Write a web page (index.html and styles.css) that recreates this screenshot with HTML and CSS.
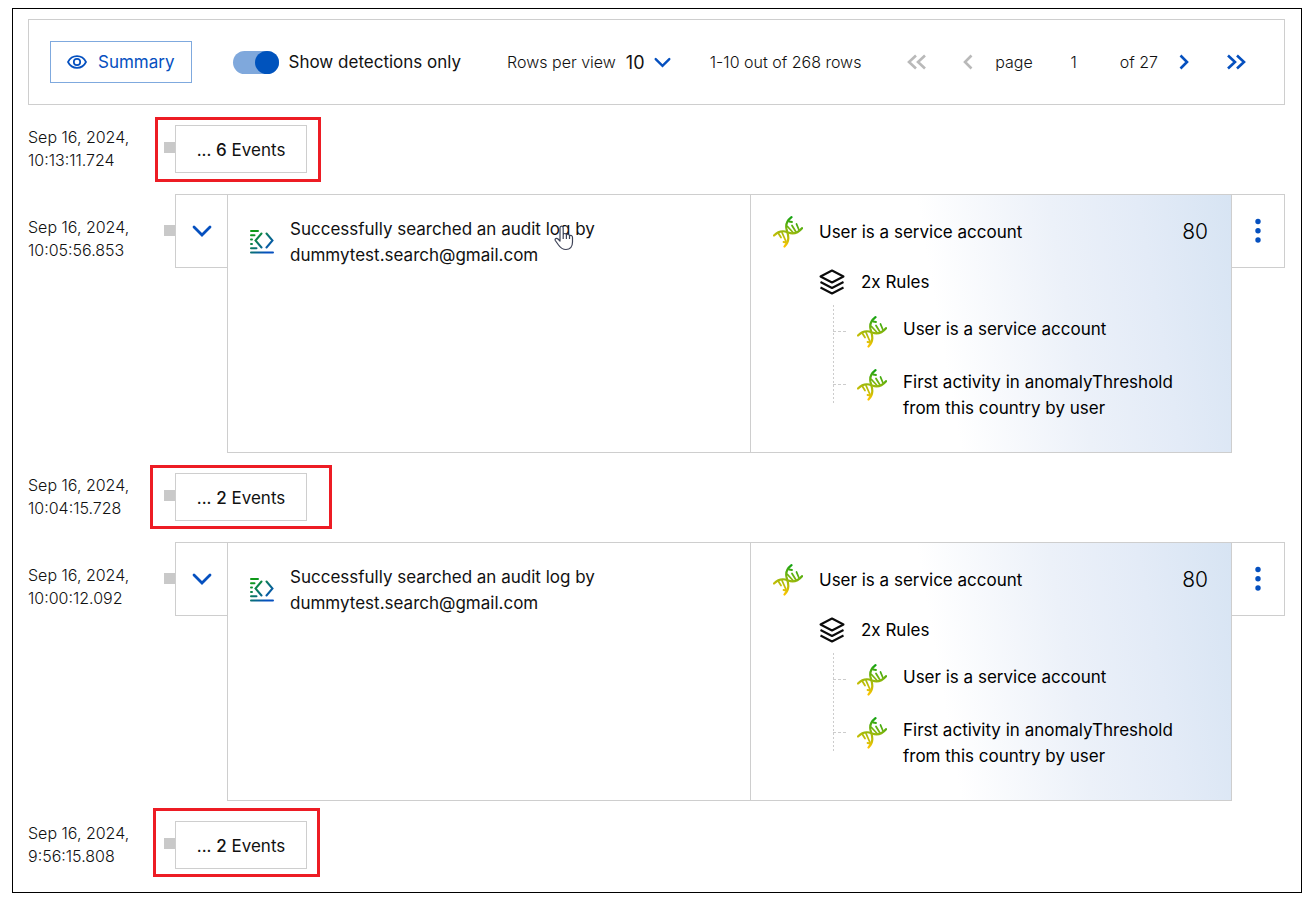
FILE: index.html
```html
<!DOCTYPE html>
<html lang="en">
<head>
<meta charset="utf-8">
<title>Event timeline</title>
<link rel="stylesheet" href="styles.css">
</head>
<body>
<svg class="defs" aria-hidden="true">
  <defs>
    <linearGradient id="dna-grad" gradientUnits="userSpaceOnUse" x1="19" y1="1" x2="11" y2="31">
      <stop offset="0" stop-color="#12a312"/><stop offset=".5" stop-color="#96b80c"/><stop offset="1" stop-color="#ffc400"/>
    </linearGradient>
    <linearGradient id="audit-grad" gradientUnits="userSpaceOnUse" x1="4" y1="3" x2="20" y2="20">
      <stop offset="0" stop-color="#0f9a16"/><stop offset="1" stop-color="#0550bf"/>
    </linearGradient>
    <symbol id="dna" viewBox="0 0 30 32">
      <g fill="none" stroke="url(#dna-grad)" stroke-linecap="round">
        <path stroke-width="2.200" d="M18.500 1.200C13.500 5 12.500 8.500 13.500 13C15 18.500 17.500 24.500 11.500 30.500"/>
        <path stroke-width="2.200" d="M1 19.500C6 14.500 10 14.500 15 16.500C20 18.500 25 17 29 12.200"/>
        <path stroke-width="1.800" d="M16 5.500l3 .5M14.500 10.500l5.500 6M19 9.500l4 6.500M23.500 8l2.500 6M5.500 17.500l2.500 4M9 16.500l4 9M13 26.500l-2.500-.5"/>
      </g>
    </symbol>
    <symbol id="audit" viewBox="0 0 24 25">
      <g fill="none" stroke="url(#audit-grad)" stroke-width="2" stroke-linecap="round">
        <path d="M1 2h7M1 6.300h3.500M1 10.600h1M1 14.900h1M1 19.200h5.500M11.500 4.500L5.500 11.500L11.500 18.500M16.500 4.500L22.500 11.500L16.500 18.500"/>
        <path d="M1 23.500L23 23.600"/>
      </g>
    </symbol>
    <symbol id="layers" viewBox="0 0 26 26">
      <path d="M13 1.500L24.500 7.500L13 13.500L1.500 7.500ZM1.500 13L13 19L24.500 13M1.500 18.500L13 24.500L24.500 18.500" fill="none" stroke="#0b0b0b" stroke-width="2" stroke-linejoin="round"/>
    </symbol>
    <symbol id="down" viewBox="0 0 20 12">
      <path d="M2 2l8 8 8-8" fill="none" stroke="currentColor" stroke-width="2.800" stroke-linecap="round"/>
    </symbol>
    <symbol id="dots" viewBox="0 0 6 26">
      <g fill="currentColor"><circle cx="3" cy="3.500" r="2.700"/><circle cx="3" cy="12.700" r="2.700"/><circle cx="3" cy="22" r="2.700"/></g>
    </symbol>
  </defs>
</svg>

<main class="frame">
  <header class="toolbar">
    <button class="summary" type="button">
      <svg width="20" height="14" viewBox="0 0 20 14" fill="none" stroke="currentColor" stroke-width="1.700"><path d="M1 7C3 3 6.200 1.100 10 1.100S17 3 19 7C17 11 13.800 12.900 10 12.900S3 11 1 7Z"/><circle cx="10" cy="7" r="3.200"/></svg>
      Summary
    </button>
    <label class="switch"><input type="checkbox" checked><span>Show detections only</span></label>
    <div class="rows">
      <label for="rows-per-view">Rows per view</label>
      <span class="select"><select id="rows-per-view"><option>10</option></select><svg width="17" height="11"><use href="#down"/></svg></span>
    </div>
    <span class="count">1-10 out of 268 rows</span>
    <nav class="pager" aria-label="Pages">
      <button type="button" class="off" aria-label="First page" disabled><svg width="20" height="16" viewBox="0 0 20 16"><path d="M9 1.500L2 8l7 6.500M18 1.500L11 8l7 6.500"/></svg></button>
      <button type="button" class="off prev" aria-label="Previous page" disabled><svg width="12" height="16" viewBox="0 0 12 16"><path d="M9.500 1.500L3 8l6.500 6.500"/></svg></button>
      <label for="page-number">page</label>
      <input id="page-number" type="text" value="1">
      <span>of 27</span>
      <button type="button" class="next" aria-label="Next page"><svg width="12" height="16" viewBox="0 0 12 16"><path d="M2.500 1.500L9 8l-6.500 6.500"/></svg></button>
      <button type="button" class="last" aria-label="Last page"><svg width="20" height="16" viewBox="0 0 20 16"><path d="M2 1.500L9 8l-7 6.500M11 1.500L18 8l-7 6.500"/></svg></button>
    </nav>
  </header>

  <section class="timeline">
    <div class="row group">
      <time>Sep 16, 2024,<br>10:13:11.724</time>
      <i class="tick"></i>
      <button class="events" type="button">... <b>6</b> Events</button>
      <div class="mark mark-first"></div>
    </div>

    <article class="row entry">
      <time>Sep 16, 2024,<br>10:05:56.853</time>
      <i class="tick"></i>
      <button class="side expand" type="button" aria-label="Expand"><svg width="20" height="12"><use href="#down"/></svg></button>
      <div class="event">
        <svg width="24" height="25"><use href="#audit"/></svg>
        <p>Successfully searched an audit log by dummytest.search@gmail.com</p>
        <svg class="cursor" width="20" height="26" viewBox="0 0 20 26"><path d="M6 16V3.200C6 .5 9.200.5 9.200 3.200V10C9.500 8 12.200 8 12.400 10.200C13 8.500 15.300 9 15.500 11C16.500 9.800 18.500 10.500 18.500 12.500V17C18.500 22 16 24.500 12 24.500C8 24.500 6.500 23 4.500 20L1.300 15.500C.5 13.800 2.500 12.500 4 14ZM9.200 10v4M12.400 10.500v3.500M15.500 11.500V14" fill="#fff" stroke="#3d4256" stroke-width="1.200" stroke-linejoin="round"/></svg>
      </div>
      <div class="detection">
        <div class="head"><svg width="30" height="32"><use href="#dna"/></svg><span>User is a service account</span><span class="score">80</span></div>
        <div class="rules"><svg width="26" height="26"><use href="#layers"/></svg><span>2x Rules</span></div>
        <ul class="tree">
          <li><svg width="30" height="32"><use href="#dna"/></svg><span>User is a service account</span></li>
          <li><svg width="30" height="32"><use href="#dna"/></svg><span>First activity in anomalyThreshold from this country by user</span></li>
        </ul>
      </div>
      <button class="side menu" type="button" aria-label="More actions"><svg width="6" height="26"><use href="#dots"/></svg></button>
    </article>

    <div class="row group">
      <time>Sep 16, 2024,<br>10:04:15.728</time>
      <i class="tick"></i>
      <button class="events" type="button">... <b>2</b> Events</button>
      <div class="mark mark-second"></div>
    </div>

    <article class="row entry">
      <time>Sep 16, 2024,<br>10:00:12.092</time>
      <i class="tick"></i>
      <button class="side expand" type="button" aria-label="Expand"><svg width="20" height="12"><use href="#down"/></svg></button>
      <div class="event">
        <svg width="24" height="25"><use href="#audit"/></svg>
        <p>Successfully searched an audit log by dummytest.search@gmail.com</p>
      </div>
      <div class="detection">
        <div class="head"><svg width="30" height="32"><use href="#dna"/></svg><span>User is a service account</span><span class="score">80</span></div>
        <div class="rules"><svg width="26" height="26"><use href="#layers"/></svg><span>2x Rules</span></div>
        <ul class="tree">
          <li><svg width="30" height="32"><use href="#dna"/></svg><span>User is a service account</span></li>
          <li><svg width="30" height="32"><use href="#dna"/></svg><span>First activity in anomalyThreshold from this country by user</span></li>
        </ul>
      </div>
      <button class="side menu" type="button" aria-label="More actions"><svg width="6" height="26"><use href="#dots"/></svg></button>
    </article>

    <div class="row group">
      <time>Sep 16, 2024,<br>9:56:15.808</time>
      <i class="tick"></i>
      <button class="events" type="button">... <b>2</b> Events</button>
      <div class="mark mark-third"></div>
    </div>
  </section>
</main>
</body>
</html>
```
FILE: styles.css
```css
* { box-sizing: border-box; }
body { margin: 8px 11px 9px 12px; background: #fff; color: #111; font: 16px/23px Inter, "Liberation Sans", sans-serif; }
button, input, select { font: inherit; color: inherit; background: none; border: 0; padding: 0; margin: 0; }
button { cursor: pointer; }
svg { display: block; flex: none; }
p, ul { margin: 0; padding: 0; }
b { font-weight: 500; }
.defs { position: absolute; width: 0; height: 0; }

.frame { border: 1px solid #000; padding: 10px 16px 23px 15px; }

/* toolbar */
.toolbar { display: flex; align-items: center; border: 1px solid #cecece; padding: 21px 38px 21px 21px; font-size: 16px; font-weight: 300; }
.summary { display: flex; align-items: center; gap: 11px; border: 1px solid #7fa9de; padding: 0 16px; height: 42px; font-size: 17px; font-weight: 400; color: #0550bf; }
.switch { display: flex; align-items: center; gap: 10px; margin-left: 41px; font-size: 17px; font-weight: 400; }
.switch input { appearance: none; width: 46px; height: 23px; border-radius: 12px; background: #7fa8dc; display: flex; justify-content: flex-end; }
.switch input::before { content: ""; width: 24px; height: 23px; border-radius: 50%; background: #0053bd; }
.rows { display: flex; align-items: center; gap: 10px; margin-left: 46px; }
.select { display: flex; align-items: center; gap: 9px; color: #0550bf; }
.select select { appearance: none; color: #111; font-size: 18px; font-weight: 400; }
.count { margin-left: 39px; }
.pager { display: flex; align-items: center; margin-left: auto; }
.pager button { color: #0550bf; }
.pager button.off { color: #b9b9b9; }
.pager path { fill: none; stroke: currentColor; stroke-width: 2.600; }
.pager .prev { margin: 0 21px 0 35px; }
.pager input { width: 64px; margin: 0 14px 0 9px; text-align: center; font-weight: 300; }
.pager .next { margin: 0 36px 0 20px; }

/* timeline */
.timeline { display: flex; flex-direction: column; padding-top: 20px; }
.row { position: relative; display: grid; align-items: start; grid-template-columns: 136px 11px 52px minmax(0, 523fr) minmax(0, 482fr) 53px; }
.group { margin-bottom: 21px; }
.group:last-child { margin-bottom: 0; }
.entry { margin-bottom: 20px; }
time { font-weight: 300; padding-top: 1px; }
.entry time { padding-top: 22px; }
.tick { height: 11px; margin-top: 17px; background: #c9c9c9; }
.entry .tick { margin-top: 31px; }
.events { grid-column: 3 / 5; border: 1px solid #cecece; padding-top: 2px; height: 48px; width: 132px; font-size: 17px; }
.mark { position: absolute; border: 3px solid #ed1c24; pointer-events: none; }
.mark-first { left: 127px; top: -8px; width: 166px; height: 65px; }
.mark-second { left: 122px; top: -8px; width: 182px; height: 64px; }
.mark-third { left: 125px; top: -13px; width: 167px; height: 69px; }
.side { display: flex; align-items: center; justify-content: center; height: 74px; border: 1px solid #cecece; color: #0550bf; }
.expand { border-right: 0; }
.menu { border-left: 0; }
.event, .detection { align-self: stretch; border: 1px solid #cecece; font-size: 17px; line-height: 26px; }
.event { position: relative; display: flex; align-items: flex-start; gap: 16px; padding: 21px 140px 0 22px; border-right: 0; }
.event > svg:first-child { margin-top: 13px; }
.event .cursor { position: absolute; left: 326px; top: 30px; }
.detection { padding: 20px 23px 31px 22px; color: #000; background: linear-gradient(80deg, #fff 40%, #ecf1f9 65%, #e3ebf7 82%, #d7e4f3 100%); }
.head { display: flex; align-items: center; gap: 16px; height: 33px; }
.score { margin-left: auto; font-size: 21px; font-weight: 300; }
.rules { display: flex; align-items: center; gap: 16px; margin: 21px 0 10px 46px; }
.tree { list-style: none; margin-left: 60px; background: repeating-linear-gradient(#ccc 0 2px, transparent 2px 4px) 0 0 / 1px 100px no-repeat; }
.tree li { display: flex; align-items: flex-start; gap: 16px; padding: 11px 0 0 24px; background: repeating-linear-gradient(90deg, #ccc 0 3px, transparent 3px 5px) 0 26px / 14px 1px no-repeat; }
.tree li + li { margin-top: 10px; }
```
